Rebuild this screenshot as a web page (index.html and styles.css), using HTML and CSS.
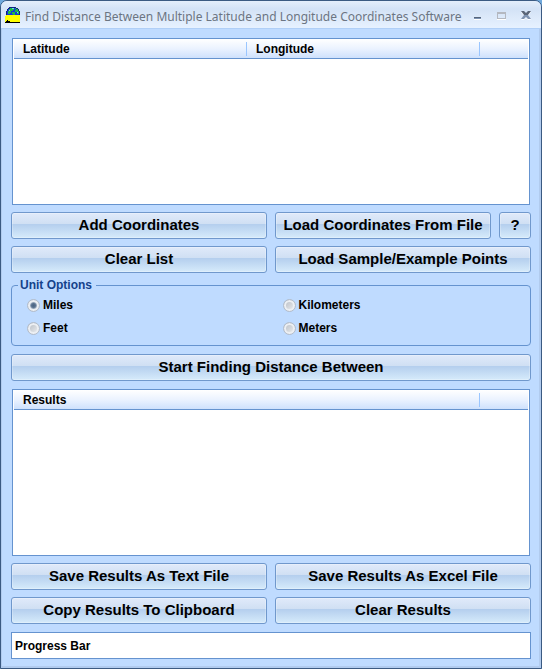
FILE: index.html
```html
<!DOCTYPE html>
<html lang="en">
<head>
    <meta charset="UTF-8">
    <meta name="viewport" content="width=device-width, initial-scale=1.0">
    <title>Find Distance Between Multiple Latitude and Longitude Coordinates Software</title>
    <link rel="stylesheet" href="styles.css">
</head>
<body>
    <div class="window">
        <!-- Title bar -->
        <header class="title-bar">
            <svg class="app-icon" width="16" height="16" viewBox="0 0 16 16" shape-rendering="crispEdges" aria-hidden="true">
                <path fill="#102080" d="M4 0h7v1h2v1h1v2h1v4H1V4h1V2h1V1h1z"/>
                <path fill="#1238d8" d="M5 1h6v1h2v2h1v4H2V4h1V2h2z"/>
                <path fill="#20b848" d="M5 1h4v2H8v1H6v2H5v1H3V4h1V2h1zM10 1h1v1h2v2h1v3h-2V5h-2V3h1V2h-1zM7 5h3v3H8V7H7z"/>
                <path fill="#70d8e8" d="M7 1h2v1H7zM4 3h1v1H4zM12 5h1v1h-1z"/>
                <path fill="#ff0" d="M0 9h1V8h14v7H0z"/>
                <path fill="#000" d="M0 15h15v1H0zM1 14h4v1H1zM2 13h1v1H2z"/>
            </svg>
            <h1>Find Distance Between Multiple Latitude and Longitude Coordinates Software</h1>
            <div class="window-controls">
                <button type="button" aria-label="Minimize">
                    <svg width="12" height="12" viewBox="0 0 12 12" shape-rendering="crispEdges">
                        <path fill="#56657a" d="M2 8h7v1H2z"/>
                        <path fill="#7d93b3" d="M2 9h7v1H2z"/>
                        <path fill="#fff" d="M2 10h7v1H2z"/>
                    </svg>
                </button>
                <button type="button" aria-label="Maximize" disabled>
                    <svg width="12" height="12" viewBox="0 0 12 12" shape-rendering="crispEdges">
                        <path fill="#b4b8c0" fill-rule="evenodd" d="M1 3h9v7H1zM2 5v4h7V5z"/>
                        <path fill="#fff" d="M1 10h9v1H1z"/>
                    </svg>
                </button>
                <button type="button" aria-label="Close">
                    <svg width="12" height="12" viewBox="0 0 12 12">
                        <path fill="#fff" d="M1 3h3l2 2 2-2h3L8 7l3 4H8L6 9l-2 2H1l3-4z"/>
                        <path fill="#5b6678" d="M1 2h3l2 2 2-2h3L8 6H4z"/>
                        <path fill="#7f93b1" d="M4 6h4l3 4H8L6 8l-2 2H1z"/>
                    </svg>
                </button>
            </div>
        </header>

        <main class="content">
            <div class="list-box">
                <table class="coordinates">
                    <thead>
                        <tr>
                            <th scope="col"><span>Latitude</span></th>
                            <th scope="col"><span>Longitude</span></th>
                            <td></td>
                        </tr>
                    </thead>
                    <tbody></tbody>
                </table>
            </div>

            <div class="button-grid">
                <button type="button" class="btn">Add Coordinates</button>
                <div class="load-row">
                    <button type="button" class="btn">Load Coordinates From File</button>
                    <button type="button" class="btn btn-help">?</button>
                </div>
                <button type="button" class="btn">Clear List</button>
                <button type="button" class="btn">Load Sample/Example Points</button>
            </div>

            <fieldset class="units">
                <legend>Unit Options</legend>
                <div class="unit-grid">
                    <label><input type="radio" name="unit" value="miles" checked>Miles</label>
                    <label><input type="radio" name="unit" value="kilometers">Kilometers</label>
                    <label><input type="radio" name="unit" value="feet">Feet</label>
                    <label><input type="radio" name="unit" value="meters">Meters</label>
                </div>
            </fieldset>

            <button type="button" class="btn">Start Finding Distance Between</button>

            <div class="list-box">
                <table class="results">
                    <thead>
                        <tr>
                            <th scope="col"><span>Results</span></th>
                            <td></td>
                        </tr>
                    </thead>
                    <tbody></tbody>
                </table>
            </div>

            <div class="button-grid">
                <button type="button" class="btn">Save Results As Text File</button>
                <button type="button" class="btn">Save Results As Excel File</button>
                <button type="button" class="btn">Copy Results To Clipboard</button>
                <button type="button" class="btn">Clear Results</button>
            </div>

            <div class="progress">Progress Bar</div>
        </main>
    </div>
</body>
</html>
```

FILE: styles.css
```css
* {
    box-sizing: border-box;
}

body {
    margin: 0;
    background-color: #6fa8dc;
    font-family: "Liberation Sans", Arial, sans-serif;
    font-size: 12px;
    font-weight: bold;
    color: #000;
}

.window {
    display: flex;
    flex-direction: column;
    min-height: 100vh;
    border: 1px solid #3b5a82;
    border-radius: 7px 7px 0 0;
    background-color: #bfdbff;
    box-shadow: inset 1px -2px 0 #b1cbee, inset -2px 0 0 #b1cbee;
    overflow: hidden;
}

/* Title bar */
.title-bar {
    display: flex;
    align-items: center;
    gap: 4px;
    height: 28px;
    padding: 0 9px 0 4px;
    border-bottom: 1px solid #b0cff7;
    background: linear-gradient(#e4eefb 0, #d3e2f6 8px, #dce9fa 16px, #e6f1ff 100%);
}

.app-icon {
    flex: none;
}

.title-bar h1 {
    flex: 1;
    margin: 0;
    padding-top: 4px;
    font-family: "Noto Sans", Tahoma, sans-serif;
    font-size: 12px;
    font-weight: normal;
    line-height: 16px;
    white-space: nowrap;
    color: #6c7582;
}

.window-controls {
    display: flex;
    gap: 12px;
}

.window-controls button {
    width: 12px;
    height: 12px;
    padding: 0;
    border: none;
    background: none;
}

.window-controls svg {
    display: block;
}

/* Content */
.content {
    flex: 1;
    display: flex;
    flex-direction: column;
    gap: 8px;
    padding: 9px 10px;
}

.list-box {
    flex: 1;
    min-height: 120px;
    margin: 0 1px;
    padding: 0 1px;
    border: 1px solid #6593cf;
    background-color: #fff;
}

.list-box table {
    width: 100%;
    table-layout: fixed;
    border-spacing: 0;
}

.list-box thead {
    background: linear-gradient(#fff, #eaf2ff 50%, #cbdffc);
}

.list-box th,
.list-box td {
    height: 20px;
    padding: 3px 0 2px;
    border-bottom: 1px solid #6593cf;
    text-align: left;
}

.list-box td {
    width: 48px;
}

.list-box th span {
    display: block;
    padding-left: 9px;
    border-right: 1px solid #9ac6ff;
    line-height: 14px;
}

/* Buttons */
.button-grid {
    display: grid;
    grid-template-columns: 1fr 1fr;
    gap: 7px 8px;
    margin-top: -1px;
}

.load-row {
    display: flex;
    gap: 8px;
}

.load-row .btn {
    flex: 1;
}

.load-row .btn-help {
    flex: none;
    width: 32px;
}

.btn {
    height: 27px;
    padding: 0 0 2px;
    border: 1px solid #7098cc;
    border-radius: 3px;
    background: linear-gradient(#e0eafa, #cfdff3 45%, #b5cfee 46%, #d6ebfb 100%);
    box-shadow: inset 0 0 0 1px rgba(255, 255, 255, 0.25);
    font-family: inherit;
    font-size: 15px;
    font-weight: bold;
    white-space: nowrap;
    color: #000;
    cursor: pointer;
}

.btn:hover {
    background: linear-gradient(#eef4fd, #dde9f8 45%, #c4daf4 46%, #e2f2fd 100%);
}

/* Unit options */
.units {
    min-width: 0;
    margin: 0;
    padding: 8px 0 9px 15px;
    border: 1px solid #6593cf;
    border-radius: 4px;
}

.units legend {
    margin-left: -9px;
    padding: 0 4px 0 2px;
    line-height: 8px;
    color: #15428b;
}

.unit-grid {
    display: grid;
    grid-template-columns: 1fr 1fr;
    gap: 7px 8px;
}

.unit-grid label {
    display: flex;
    align-items: center;
    gap: 3px;
    line-height: 16px;
}

.unit-grid input {
    appearance: none;
    width: 13px;
    height: 13px;
    margin: 0;
    border: 1px solid #b3bdca;
    border-radius: 50%;
    background: linear-gradient(135deg, #b4bac2, #f0f1f3);
    box-shadow: inset 0 0 0 2px #eceff3;
}

.unit-grid input:checked {
    background: radial-gradient(circle, #4b6482 0, #5b7390 2px, #c9d3de 4px);
}

.progress {
    height: 27px;
    padding: 0 3px;
    border: 1px solid #6593cf;
    background-color: #fff;
    line-height: 26px;
}
```
